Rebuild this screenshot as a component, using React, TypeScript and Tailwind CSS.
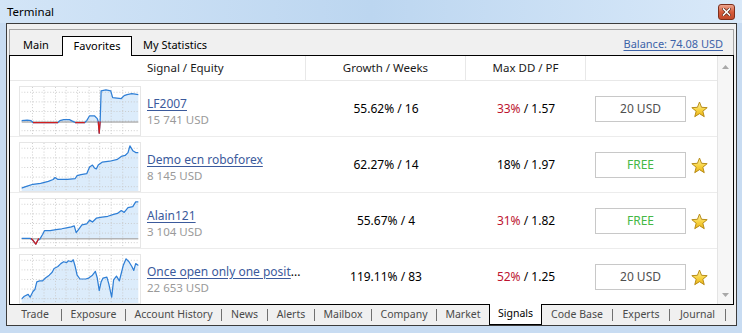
import React from 'react';

type Pt = [number, number];

type ChartData = {
  line: Pt[];
  red?: Pt[][];
  base?: number;
};

const charts: ChartData[] = [
  {
    base: 36,
    line: [[0, 35], [6, 34.5], [10, 35], [12, 37], [38, 37], [40, 35], [44, 34], [50, 34], [53, 35.5], [56, 37], [66, 37], [68, 35], [71, 30], [76, 30], [79, 33], [80, 36], [81, 48], [82, 36], [83, 4], [88, 3], [93, 4], [95, 11], [104, 12], [107, 9], [110, 8], [115, 7], [122, 8]],
    red: [[[12, 37], [38, 37]], [[56, 37], [66, 37]], [[80, 36], [81, 48], [82, 36]]],
  },
  {
    line: [[0, 47], [6, 45], [12, 43], [20, 42], [28, 40], [33, 38], [35, 36], [38, 38], [48, 38], [56, 37], [58, 34], [62, 33], [68, 32], [71, 25], [74, 23], [76, 26], [78, 27], [80, 23], [84, 20], [92, 19], [100, 17], [104, 14], [108, 13], [111, 10], [113, 3], [116, 8], [119, 10], [122, 10]],
  },
  {
    base: 41,
    line: [[0, 41], [9, 41], [12, 43], [15, 47], [17, 43], [19, 42], [22, 37], [24, 33], [30, 33], [36, 32], [42, 31], [47, 30], [52, 29], [55, 28], [57, 35], [60, 31], [63, 27], [68, 26], [71, 22], [74, 24], [78, 20], [84, 19], [90, 18], [96, 16], [100, 15], [104, 12], [107, 14], [111, 9], [116, 8], [119, 3], [122, 3]],
    red: [[[10, 41], [12, 43], [15, 47], [17, 43], [18, 41]]],
  },
  {
    line: [[0, 46], [3, 43], [7, 41], [9, 44], [12, 38], [14, 36], [16, 28], [19, 27], [22, 27], [25, 24], [29, 21], [32, 18], [34, 14], [38, 12], [41, 9], [44, 7], [47, 8], [49, 6], [52, 7], [54, 5], [56, 12], [58, 21], [61, 25], [67, 25], [70, 24], [74, 21], [77, 17], [79, 24], [81, 37], [83, 28], [85, 24], [89, 23], [91, 30], [94, 44], [96, 26], [99, 22], [102, 27], [104, 19], [106, 11], [109, 4], [112, 7], [115, 12], [117, 16], [119, 9], [122, 11]],
  },
];

const rows = [
  { name: 'LF2007', more: false, usd: '15 741 USD', growth: '55.62% / 16', dd: '33%', ddRed: true, pf: '1.57', price: '20 USD' },
  { name: 'Demo ecn roboforex', more: false, usd: '8 145 USD', growth: '62.27% / 14', dd: '18%', ddRed: false, pf: '1.97', price: 'FREE' },
  { name: 'Alain121', more: false, usd: '3 104 USD', growth: '55.67% / 4', dd: '31%', ddRed: true, pf: '1.82', price: 'FREE' },
  { name: 'Once open only one posit', more: true, usd: '22 653 USD', growth: '119.11% / 83', dd: '52%', ddRed: true, pf: '1.25', price: '20 USD' },
];

const bottomTabs: { label: string; w: number; sep: boolean; active?: boolean }[] = [
  { label: 'Trade', w: 52, sep: true },
  { label: 'Exposure', w: 63, sep: true },
  { label: 'Account History', w: 95, sep: true },
  { label: 'News', w: 45, sep: true },
  { label: 'Alerts', w: 46, sep: true },
  { label: 'Mailbox', w: 56, sep: true },
  { label: 'Company', w: 64, sep: true },
  { label: 'Market', w: 52, sep: false },
  { label: 'Signals', w: 53, sep: false, active: true },
  { label: 'Code Base', w: 70, sep: true },
  { label: 'Experts', w: 56, sep: true },
  { label: 'Journal', w: 55, sep: true },
];

const toPath = (pts: Pt[]) => pts.map((p, i) => `${i ? 'L' : 'M'}${p[0]} ${p[1]}`).join(' ');

function Chart({ data, id }: { data: ChartData; id: number }) {
  const W = 122;
  const H = 50;
  const b = data.base ?? H;
  const first = data.line[0];
  const last = data.line[data.line.length - 1];
  const fill =
    `M${first[0]} ${b} ` +
    data.line.map((p) => `L${p[0]} ${Math.min(p[1], b)}`).join(' ') +
    ` L${last[0]} ${b} Z`;
  const vx = [11.5, 23.5, 35.5, 46.5, 58.5, 70.5, 81.5, 93.5, 105.5];
  const hy = [5.5, 15.5, 25.5, 35.5, 45.5];

  return (
    <svg width={W} height={H} viewBox={`0 0 ${W} ${H}`} className="block shrink-0 border border-[#e6e6e6] bg-white">
      <defs>
        <clipPath id={`c${id}`}>
          <rect x="0" y="0" width={W} height={H} />
        </clipPath>
      </defs>
      <g clipPath={`url(#c${id})`}>
        <path d={fill} fill="#dcecfb" />
        {vx.map((x) => (
          <line key={'v' + x} x1={x} y1={0} x2={x} y2={H} stroke="#c9c9c9" strokeWidth="1" strokeDasharray="1 2" />
        ))}
        {hy.map((y) => (
          <line key={'h' + y} x1={0} y1={y} x2={W} y2={y} stroke="#c9c9c9" strokeWidth="1" strokeDasharray="1 2" />
        ))}
        {data.base !== undefined && (
          <line x1={0} y1={data.base + 0.5} x2={W} y2={data.base + 0.5} stroke="#8c8c8c" strokeWidth="1" />
        )}
        <path d={toPath(data.line)} fill="none" stroke="#2f7fd6" strokeWidth="1.3" strokeLinejoin="round" />
        {data.red?.map((seg, i) => (
          <path key={i} d={toPath(seg)} fill="none" stroke="#d21e1e" strokeWidth="1.3" strokeLinejoin="round" />
        ))}
      </g>
    </svg>
  );
}

function Star() {
  return (
    <svg width="17" height="17" viewBox="0 0 16 16" className="shrink-0">
      <defs>
        <linearGradient id="starfill" x1="0" y1="0" x2="0" y2="1">
          <stop offset="0" stopColor="#fff4a8" />
          <stop offset="0.55" stopColor="#f7d23e" />
          <stop offset="1" stopColor="#eab21a" />
        </linearGradient>
      </defs>
      <polygon
        points="8,1 9.94,5.93 15.23,6.25 11.14,9.62 12.47,14.75 8,11.9 3.53,14.75 4.86,9.62 0.77,6.25 6.06,5.93"
        fill="url(#starfill)"
        stroke="#b48812"
        strokeWidth="0.9"
        strokeLinejoin="round"
      />
    </svg>
  );
}

function CloseButton() {
  return (
    <div className="ml-auto w-[17px] h-[16px] rounded-[3px] border border-[#7d2f1c] bg-gradient-to-b from-[#eba58f] via-[#d65c3c] to-[#c24a2c] flex items-center justify-center">
      <svg width="9" height="8" viewBox="0 0 9 8">
        <path d="M1.5 1 L7.5 7 M7.5 1 L1.5 7" stroke="#5a2414" strokeWidth="3" strokeLinecap="square" />
        <path d="M1.5 1 L7.5 7 M7.5 1 L1.5 7" stroke="#ffffff" strokeWidth="1.6" strokeLinecap="square" />
      </svg>
    </div>
  );
}

export default function App() {
  return (
    <div className="w-[742px] h-[333px] bg-[#c8dcf2] flex flex-col overflow-hidden font-['Noto_Sans',sans-serif] text-black">
      <div className="h-[23px] shrink-0 flex items-center pl-[7px] pr-[7px] bg-gradient-to-r from-[#d3e5f7] via-[#bcd6f0] to-[#d9e9f9]">
        <span className="text-[11.5px] leading-none">Terminal</span>
        <CloseButton />
      </div>

      <div className="ml-[6px] w-[731px] h-[303px] shrink-0 border border-[#3c3c3c] bg-[#f0f0f0] flex flex-col px-[2px] pt-[5px]">
        {/* top tab strip */}
        <div className="h-[26px] shrink-0 border-t border-l border-r border-[#a5a5a5] flex items-end">
          <div className="flex items-end h-full">
            <div className="w-[52px] h-[20px] flex items-center justify-center text-[11px]">Main</div>
            <div className="w-[70px] h-[20px] -mb-px relative z-10 bg-white border-t border-l border-r border-black flex items-center justify-center text-[11px]">
              Favorites
            </div>
            <div className="w-[86px] h-[20px] flex items-center justify-center text-[11px]">My Statistics</div>
          </div>
          <div className="ml-auto mr-[10px] h-full flex items-center pt-[3px]">
            <span className="text-[11px] text-[#3d63a8] underline underline-offset-2">Balance: 74.08 USD</span>
          </div>
        </div>

        {/* main panel */}
        <div className="h-[250px] shrink-0 border border-black bg-white flex">
          <div className="flex-1 flex flex-col overflow-hidden">
            <div className="h-[25px] shrink-0 flex border-b border-[#e8e8e8] text-[11.5px] text-[#1a1a1a]">
              <div className="w-[296px] border-r border-[#e8e8e8] flex items-center pl-[137px]">Signal / Equity</div>
              <div className="w-[160px] border-r border-[#e8e8e8] flex items-center justify-center">Growth / Weeks</div>
              <div className="w-[120px] border-r border-[#e8e8e8] flex items-center justify-center">Max DD / PF</div>
              <div className="flex-1" />
            </div>

            {rows.map((r, i) => (
              <div key={i} className="h-[56px] shrink-0 flex border-b border-[#ececec]">
                <div className="w-[296px] shrink-0 flex items-start pt-[5px] pl-[9px]">
                  <Chart data={charts[i]} id={i} />
                  <div className="ml-[6px] h-[50px] flex flex-col justify-center">
                    <div className="leading-[17px] text-[12px] whitespace-nowrap">
                      <span className="text-[#3b5a9c] underline underline-offset-2">{r.name}</span>
                      {r.more && <span className="text-black">...</span>}
                    </div>
                    <div className="leading-[16px] text-[11.5px] text-[#9a9a9a]">{r.usd}</div>
                  </div>
                </div>
                <div className="w-[160px] shrink-0 flex items-center justify-center text-[12px] pt-[1px]">{r.growth}</div>
                <div className="w-[120px] shrink-0 flex items-center justify-center text-[12px] pt-[1px]">
                  <span className={r.ddRed ? 'text-[#bd1430]' : 'text-black'}>{r.dd}</span>
                  <span>&nbsp;/ {r.pf}</span>
                </div>
                <div className="flex-1 flex items-center pl-[9px] pt-[1px]">
                  <div
                    className={`w-[91px] h-[26px] border border-[#c8c8c8] flex items-center justify-center text-[12px] ${
                      r.price === 'FREE' ? 'text-[#45b845]' : 'text-[#505050]'
                    }`}
                  >
                    {r.price}
                  </div>
                  <div className="ml-[5px]">
                    <Star />
                  </div>
                </div>
              </div>
            ))}
          </div>

          {/* scrollbar */}
          <div className="w-[16px] shrink-0 bg-[#f6f6f6] border-l border-[#e4e4e4] flex flex-col items-center justify-between pt-[9px] pb-[7px]">
            <svg width="7" height="4" viewBox="0 0 7 4">
              <path d="M0 4 L3.5 0 L7 4 Z" fill="#a8a8a8" />
            </svg>
            <svg width="7" height="4" viewBox="0 0 7 4">
              <path d="M0 0 L3.5 4 L7 0 Z" fill="#a8a8a8" />
            </svg>
          </div>
        </div>

        {/* bottom tab strip */}
        <div className="h-[20px] shrink-0 flex items-start text-[10.5px] text-[#4a4a4a]">
          {bottomTabs.map((t) => (
            <React.Fragment key={t.label}>
              {t.active ? (
                <div
                  style={{ width: t.w }}
                  className="h-[21px] -mt-px relative z-10 bg-white border-l border-r border-b border-black flex items-center justify-center text-black"
                >
                  {t.label}
                </div>
              ) : (
                <div style={{ width: t.w }} className="h-[20px] flex items-center justify-center">
                  {t.label}
                </div>
              )}
              {t.sep && (
                <div className="h-[20px] flex items-center">
                  <div className="w-px h-[12px] bg-[#707070]" />
                </div>
              )}
            </React.Fragment>
          ))}
        </div>
      </div>
    </div>
  );
}
